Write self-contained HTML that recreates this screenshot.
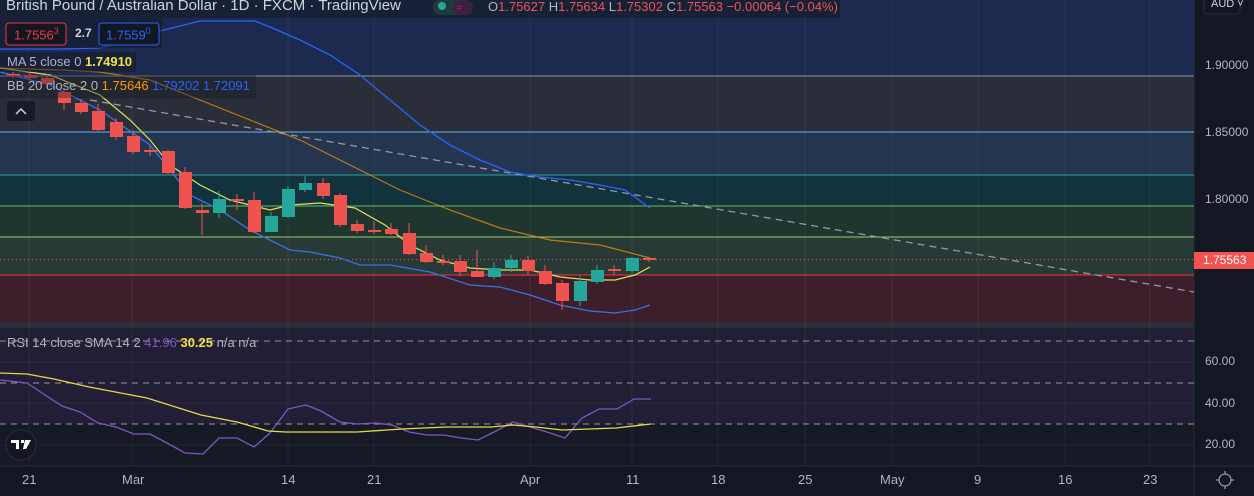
<!DOCTYPE html>
<html><head><meta charset="utf-8"><style>
html,body{margin:0;padding:0;background:#131722;}
body{width:1254px;height:496px;overflow:hidden;position:relative;font-family:"Liberation Sans",sans-serif;}
svg{position:absolute;left:0;top:0}
.t{position:absolute;white-space:nowrap;font-size:13px;}
</style></head><body>
<svg width="1254" height="496" viewBox="0 0 1254 496">
<rect x="0" y="0" width="1194" height="76" fill="#1c2a4f"/>
<rect x="0" y="76" width="1194" height="56" fill="#2a2e39"/>
<rect x="0" y="132" width="1194" height="43" fill="#243550"/>
<rect x="0" y="175" width="1194" height="31" fill="#12333d"/>
<rect x="0" y="206" width="1194" height="31" fill="#1f3530"/>
<rect x="0" y="237" width="1194" height="38" fill="#283a35"/>
<rect x="0" y="275" width="1194" height="47" fill="#3d1f2b"/>
<rect x="0" y="322" width="1194" height="6" fill="#2a2e39"/>
<rect x="0" y="328" width="1194" height="96" fill="#211e35"/>
<rect x="0" y="424" width="1194" height="42" fill="#161a25"/>
<rect x="0" y="466" width="1254" height="30" fill="#131722"/>
<rect x="1194" y="0" width="60" height="496" fill="#131722"/>
<line x1="1194" y1="0" x2="1194" y2="496" stroke="#2a2e39"/>
<line x1="0" y1="466" x2="1254" y2="466" stroke="#2a2e39"/>
<g stroke="#ffffff" stroke-opacity="0.06">
<line x1="29" y1="0" x2="29" y2="466"/><line x1="132" y1="0" x2="132" y2="466"/><line x1="288" y1="0" x2="288" y2="466"/><line x1="374" y1="0" x2="374" y2="466"/><line x1="530" y1="0" x2="530" y2="466"/><line x1="632" y1="0" x2="632" y2="466"/><line x1="718" y1="0" x2="718" y2="466"/><line x1="805" y1="0" x2="805" y2="466"/><line x1="892" y1="0" x2="892" y2="466"/><line x1="978" y1="0" x2="978" y2="466"/><line x1="1065" y1="0" x2="1065" y2="466"/><line x1="1150" y1="0" x2="1150" y2="466"/>
<line x1="0" y1="362" x2="1194" y2="362"/><line x1="0" y1="403" x2="1194" y2="403"/><line x1="0" y1="445" x2="1194" y2="445"/>
</g>
<line x1="0" y1="76" x2="1194" y2="76" stroke="#9598a1"/>
<line x1="0" y1="132" x2="1194" y2="132" stroke="#64b5f6"/>
<line x1="0" y1="175" x2="1194" y2="175" stroke="#26a69a"/>
<line x1="0" y1="206" x2="1194" y2="206" stroke="#66bb6a"/>
<line x1="0" y1="237" x2="1194" y2="237" stroke="#9ccc65"/>
<line x1="0" y1="275" x2="1194" y2="275" stroke="#f23645"/>
<line x1="0" y1="259.5" x2="1194" y2="259.5" stroke="#f05350" stroke-dasharray="1 3"/>
<line x1="90" y1="100" x2="1194" y2="292" stroke="#9598a1" stroke-width="1.3" stroke-dasharray="7 5"/>
<polyline fill="none" stroke="#2962ff" stroke-width="1.3" points="0,49 60,49 100,48 130,40 160,31 200,21 255,21 270,27 300,40 330,55 360,75 390,100 420,125 450,145 480,160 510,172 540,177 570,180 600,185 625,190 650,208"/>
<polyline fill="none" stroke="#ff9800" stroke-opacity="0.7" stroke-width="1.2" points="0,68 60,70 100,72 150,80 200,100 250,120 300,140 350,165 400,190 450,210 500,228 550,240 600,245 650,258"/>
<polyline fill="none" stroke="#3d6fe8" stroke-width="1.3" points="0,72 50,85 100,110 150,145 190,195 220,210 250,230 270,240 290,250 310,252 340,258 360,265 390,265 430,272 470,285 500,287 530,295 560,305 590,311 615,313 635,310 650,305"/>
<polyline fill="none" stroke="#e0e058" stroke-width="1.2" points="0,68 50,75 100,95 130,120 150,140 170,165 200,185 230,200 270,210 290,205 320,203 355,208 385,225 410,245 440,260 470,268 500,270 530,270 560,277 590,280 615,280 635,275 650,267"/>
<g id="c"></g>
<g stroke="#9598a1" stroke-dasharray="6 5"><line x1="0" y1="341" x2="1194" y2="341"/><line x1="0" y1="383" x2="1194" y2="383"/><line x1="0" y1="424" x2="1194" y2="424"/></g>
<polyline fill="none" stroke="#7e57c2" stroke-width="1.3" points="0,380 27,383 45,395 62,406 80,412 98,423 116,427 134,434 150,434 167,443 185,453 203,454 219,438 237,438 254,447 270,433 288,409 306,405 321,411 340,422 357,424 375,423 392,425 409,432 427,435 444,435 461,438 478,440 496,431 513,422 530,427 547,432 565,438 582,418 599,409 617,409 634,399 651,399"/>
<polyline fill="none" stroke="#e8d84a" stroke-width="1.3" points="0,373 27,374 54,379 89,387 147,398 201,415 237,422 268,431 286,432 357,432 402,429 446,427 491,427 513,425 536,427 562,430 616,428 651,424"/>
<rect x="0" y="0" width="840" height="18" fill="#131722" fill-opacity="0.55"/>
<rect x="0" y="18" width="162" height="30" fill="#131722" fill-opacity="0.55"/>
<rect x="0" y="52" width="136" height="20" fill="#131722" fill-opacity="0.45"/>
<rect x="0" y="75" width="256" height="23" fill="#131722" fill-opacity="0.35"/>
<rect x="7" y="101" width="28" height="20" rx="3" fill="#131722" fill-opacity="0.8"/>
<polyline points="16,114 21,109 26,114" fill="none" stroke="#d1d4dc" stroke-width="1.5"/>
<rect x="433" y="0" width="40" height="15" rx="7" fill="#1f3a3a"/>
<rect x="453" y="0" width="20" height="15" rx="7" fill="#3a2240"/>
<circle cx="442" cy="6" r="4" fill="#26a69a"/>
<text x="456" y="11" font-size="11" fill="#c2185b" font-family="Liberation Sans">≈</text>
<rect x="6" y="23" width="60" height="22" rx="3" fill="#131722" stroke="#f23645"/>
<rect x="99" y="23" width="60" height="22" rx="3" fill="#131722" stroke="#2962ff"/>
<circle cx="21" cy="445" r="15" fill="#131722" stroke="#2a2e39"/>
<path d="M11 440h8v9h-3v-6h-5z M21 440h3 v3h-3z M25 440h6l-5 9h-3z" fill="#fff"/>
<rect x="1194" y="252" width="60" height="17" fill="#f05350"/>
<rect x="1204" y="-3" width="36" height="17" rx="3" fill="none" stroke="#2a2e39"/>
<circle cx="1225" cy="480" r="6" fill="none" stroke="#b2b5be"/>
<g stroke="#b2b5be"><line x1="1225" y1="471" x2="1225" y2="474"/><line x1="1225" y1="486" x2="1225" y2="489"/><line x1="1216" y1="480" x2="1219" y2="480"/><line x1="1231" y1="480" x2="1234" y2="480"/></g>
</svg>
<script>
var d=[[13,74,76,72,78],[30,75,78,72,80],[47,78,84,74,88],[64,92,103,88,110],[81,103,112,99,114],[98,111,130,104,131],[116,122,137,118,140],[133,136,152,130,154],[150,150,151,146,156],[168,151,173,150,174],[185,172,208,167,209],[202,210,213,203,235],[219,213,199,191,218],[237,199,201,194,210],[254,200,232,192,233],[271,232,216,212,232],[288,217,189,186,218],[305,190,183,176,192],[323,183,196,178,199],[340,195,225,193,227],[357,224,231,220,233],[374,230,231,221,234],[391,229,234,223,235],[409,233,254,223,255],[426,253,262,245,263],[443,261,263,255,265],[460,261,272,255,276],[477,271,277,250,277],[494,277,268,262,279],[511,268,260,255,272],[528,260,271,256,275],[545,271,284,265,285],[562,283,301,280,310],[580,301,281,276,306],[597,282,270,265,284],[614,269,270,265,275],[632,271,258,257,273],[649,258,260,257,262]];
var s='';d.forEach(function(c){var up=c[2]<c[1];var col=up?'#26a69a':'#ef5350';var t=Math.min(c[1],c[2]),h=Math.max(2,Math.abs(c[2]-c[1]));s+='<line x1="'+c[0]+'" y1="'+c[3]+'" x2="'+c[0]+'" y2="'+c[4]+'" stroke="'+col+'"/><rect x="'+(c[0]-6)+'" y="'+t+'" width="13" height="'+h+'" fill="'+col+'"/>';});
document.getElementById('c').innerHTML=s;
</script>
<div class="t" style="left:6px;top:-3px;font-size:15px;color:#d1d4dc">British Pound / Australian Dollar · 1D · FXCM · TradingView</div>
<div class="t" style="left:488px;top:-1px;color:#b2b5be">O<span style="color:#f05350">1.75627</span> H<span style="color:#f05350">1.75634</span> L<span style="color:#f05350">1.75302</span> C<span style="color:#f05350">1.75563</span> <span style="color:#f05350">−0.00064 (−0.04%)</span></div>
<div class="t" style="left:14px;top:26px;color:#f23645">1.7556<sup style="font-size:9px">3</sup></div>
<div class="t" style="left:75px;top:26px;color:#d1d4dc;font-size:12px;font-weight:bold">2.7</div>
<div class="t" style="left:106px;top:26px;color:#2962ff">1.7559<sup style="font-size:9px">0</sup></div>
<div class="t" style="left:7px;top:54px;color:#b2b5be">MA 5 close 0 <b style="color:#f5e33b">1.74910</b></div>
<div class="t" style="left:7px;top:78px;color:#b2b5be">BB 20 close 2 0 <span style="color:#ff9800">1.75646</span> <span style="color:#2962ff">1.79202 1.72091</span></div>
<div class="t" style="left:7px;top:335px;color:#b2b5be;font-size:13px">RSI 14 close SMA 14 2 <span style="color:#7e57c2">41.96</span> <b style="color:#f5e33b">30.25</b> n/a n/a</div>
<div class="t" style="left:1211px;top:-2px;color:#d1d4dc;font-size:11px">AUD ˅</div>
<div class="t" style="left:1205px;top:58px;color:#b2b5be;font-size:12px">1.90000</div>
<div class="t" style="left:1205px;top:125px;color:#b2b5be;font-size:12px">1.85000</div>
<div class="t" style="left:1205px;top:192px;color:#b2b5be;font-size:12px">1.80000</div>
<div class="t" style="left:1203px;top:253px;color:#fff;font-size:12px">1.75563</div>
<div class="t" style="left:1205px;top:354px;color:#b2b5be;font-size:12px">60.00</div>
<div class="t" style="left:1205px;top:396px;color:#b2b5be;font-size:12px">40.00</div>
<div class="t" style="left:1205px;top:437px;color:#b2b5be;font-size:12px">20.00</div>
<div style="position:absolute;left:0;top:472px;width:1194px;height:18px;font-size:12px;color:#b2b5be">
<span class="t" style="left:22px">21</span><span class="t" style="left:122px">Mar</span><span class="t" style="left:281px">14</span><span class="t" style="left:367px">21</span><span class="t" style="left:520px">Apr</span><span class="t" style="left:626px">11</span><span class="t" style="left:711px">18</span><span class="t" style="left:798px">25</span><span class="t" style="left:880px">May</span><span class="t" style="left:974px">9</span><span class="t" style="left:1058px">16</span><span class="t" style="left:1143px">23</span></div>
</body></html>
